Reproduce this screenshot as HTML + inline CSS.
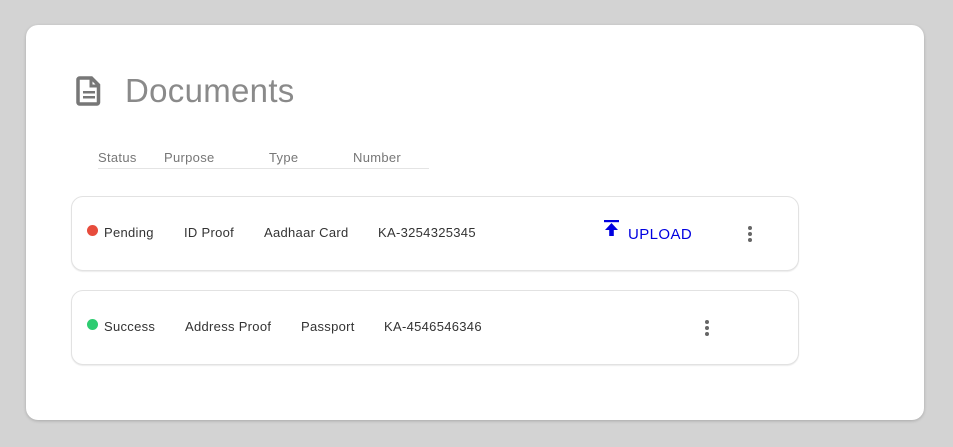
<!DOCTYPE html>
<html><head><style>
body{margin:0;width:953px;height:447px;background:#d3d3d3;font-family:"Liberation Sans",sans-serif;position:relative;overflow:hidden}
.card{position:absolute;left:26px;top:25px;width:898px;height:395px;background:#fff;border-radius:12px;box-shadow:0 1px 3px rgba(0,0,0,.2)}
.a{position:absolute;white-space:nowrap}
.row{position:absolute;left:71px;width:726px;height:73px;border:1px solid #e2e2e2;border-radius:12px;box-shadow:0 1px 1px rgba(0,0,0,.08);background:#fff}
.t{font-size:13px;color:#333;letter-spacing:.3px}
.h{font-size:13px;color:#777;letter-spacing:.3px}
.dot{position:absolute;width:11px;height:11px;border-radius:50%}
.dots{position:absolute;width:4px}
.dots i{display:block;width:4px;height:4px;border-radius:50%;background:#666;margin-bottom:2px}
</style></head><body>
<div class="card"></div>
<svg class="a" style="left:76px;top:76px" width="26" height="30" viewBox="0 0 26 30"><path d="M3.5 2h12l7 7v17.5a1.5 1.5 0 0 1-1.5 1.5H3.5A1.5 1.5 0 0 1 2 26.5V3.5A1.5 1.5 0 0 1 3.5 2z" fill="none" stroke="#777" stroke-width="3.5"/><path d="M15 2v8h8" fill="none" stroke="#777" stroke-width="3"/><rect x="7" y="15" width="12" height="2.5" fill="#777"/><rect x="7" y="20" width="12" height="2.5" fill="#777"/></svg>
<div class="a" style="left:125px;top:72px;font-size:33px;color:#8a8a8a;letter-spacing:.3px">Documents</div>
<div class="a h" style="left:98px;top:150px">Status</div>
<div class="a h" style="left:164px;top:150px">Purpose</div>
<div class="a h" style="left:269px;top:150px">Type</div>
<div class="a h" style="left:353px;top:150px">Number</div>
<div class="a" style="left:98px;top:168px;width:331px;height:1px;background:#e4e4e4"></div>
<div class="row" style="top:196px"></div>
<div class="dot" style="left:87px;top:225px;background:#e74c3c"></div>
<div class="a t" style="left:104px;top:225px">Pending</div>
<div class="a t" style="left:184px;top:225px">ID Proof</div>
<div class="a t" style="left:264px;top:225px">Aadhaar Card</div>
<div class="a t" style="left:378px;top:225px">KA-3254325345</div>
<svg class="a" style="left:603px;top:220px" width="17" height="18" viewBox="0 0 17 18"><rect x="1" y="0" width="15" height="2.2" fill="#0000e0"/><path d="M8.5 3L2 10h4.2v6h4.6v-6H15z" fill="#0000e0"/></svg>
<div class="a" style="left:628px;top:226px;font-size:15px;color:#0000e0;letter-spacing:.4px">UPLOAD</div>
<div class="dots" style="left:748px;top:226px"><i></i><i></i><i></i></div>
<div class="row" style="top:290px"></div>
<div class="dot" style="left:87px;top:319px;background:#2ecc71"></div>
<div class="a t" style="left:104px;top:319px">Success</div>
<div class="a t" style="left:185px;top:319px">Address Proof</div>
<div class="a t" style="left:301px;top:319px">Passport</div>
<div class="a t" style="left:384px;top:319px">KA-4546546346</div>
<div class="dots" style="left:705px;top:320px"><i></i><i></i><i></i></div>
</body></html>
